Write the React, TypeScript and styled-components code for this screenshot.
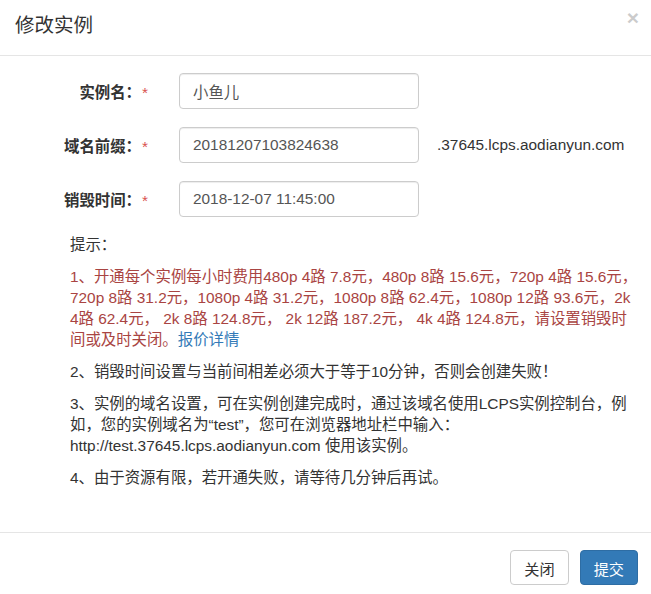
import React from "react";
import styled, { createGlobalStyle } from "styled-components";

const GlobalStyle = createGlobalStyle`
  html, body { margin: 0; padding: 0; background: #fff; }
  body {
    font-family: "Liberation Sans", Arial, "Noto Sans CJK SC", sans-serif;
    font-size: 15.4px;
    color: #333;
    text-spacing-trim: space-all;
  }
  * { box-sizing: border-box; }
`;

const Modal = styled.div`
  width: 651px;
  height: 594px;
  display: flex;
  flex-direction: column;
  background: #fff;
`;

const Header = styled.div`
  position: relative;
  height: 56px;
  padding: 12px 15px 0 15px;
  border-bottom: 1px solid #e5e5e5;
`;

const Title = styled.h4`
  margin: 0;
  font-size: 19.5px;
  font-weight: normal;
  line-height: 26px;
  color: #333;
`;

const Close = styled.button`
  position: absolute;
  top: 7px;
  right: 12px;
  border: 0;
  background: transparent;
  padding: 0;
  font-size: 21px;
  font-weight: bold;
  line-height: 21px;
  color: #000;
  opacity: 0.2;
  font-family: "Liberation Sans", Arial, sans-serif;
  cursor: pointer;
`;

const Body = styled.div`
  flex: 1;
  padding: 17px 0 0 0;
`;

const Form = styled.div`
  display: flex;
  flex-direction: column;
  gap: 18px;
`;

const Row = styled.div`
  display: grid;
  grid-template-columns: 148px 240px auto;
  column-gap: 31px;
  align-items: center;
`;

const Label = styled.label`
  text-align: right;
  font-weight: bold;
  font-size: 15.4px;
  color: #333;
  white-space: nowrap;
`;

const Star = styled.span`
  color: #d9534f;
  font-weight: normal;
  margin-left: 1px;
`;

const Input = styled.input`
  width: 240px;
  height: 36px;
  padding: 6px 13px;
  border: 1px solid #ccc;
  border-radius: 4px;
  font-family: "Liberation Sans", Arial, "Noto Sans CJK SC", sans-serif;
  font-size: 15.4px;
  color: #555;
  box-shadow: inset 0 1px 1px rgba(0, 0, 0, 0.075);
  outline: none;
`;

const Suffix = styled.span`
  margin-left: -13px;
  font-size: 15.4px;
  color: #333;
  white-space: nowrap;
`;

const Tips = styled.div`
  margin: 17px 0 0 70px;
  width: 570px;
`;

const P = styled.p<{ $danger?: boolean }>`
  margin: 0 0 11px;
  font-size: 15.4px;
  line-height: 21px;
  color: ${(p) => (p.$danger ? "#a94442" : "#333")};
`;

const Link = styled.a`
  color: #337ab7;
  text-decoration: none;
`;

const Footer = styled.div`
  height: 62px;
  border-top: 1px solid #e5e5e5;
  padding: 17px 13px 0 0;
  display: flex;
  justify-content: flex-end;
  gap: 11px;
`;

const Button = styled.button<{ $primary?: boolean }>`
  height: 35px;
  padding: 0 13px;
  font-family: "Liberation Sans", Arial, "Noto Sans CJK SC", sans-serif;
  font-size: 15.2px;
  border-radius: 4px;
  border: 1px solid ${(p) => (p.$primary ? "#2e6da4" : "#ccc")};
  background: ${(p) => (p.$primary ? "#337ab7" : "#fff")};
  color: ${(p) => (p.$primary ? "#fff" : "#333")};
  cursor: pointer;
`;

export default function App() {
  return (
    <>
      <GlobalStyle />
      <Modal>
        <Header>
          <Title>修改实例</Title>
          <Close aria-label="Close">×</Close>
        </Header>
        <Body>
          <Form>
            <Row>
              <Label>
                实例名：<Star>*</Star>
              </Label>
              <Input defaultValue="小鱼儿" />
            </Row>
            <Row>
              <Label>
                域名前缀：<Star>*</Star>
              </Label>
              <Input defaultValue="20181207103824638" />
              <Suffix>.37645.lcps.aodianyun.com</Suffix>
            </Row>
            <Row>
              <Label>
                销毁时间：<Star>*</Star>
              </Label>
              <Input defaultValue="2018-12-07 11:45:00" />
            </Row>
          </Form>
          <Tips>
            <P>提示：</P>
            <P $danger>
              1、开通每个实例每小时费用480p 4路 7.8元，480p 8路 15.6元，720p 4路 15.6元，720p 8路 31.2元，1080p 4路 31.2元，1080p 8路 62.4元，1080p 12路 93.6元，2k 4路 62.4元， 2k 8路 124.8元， 2k 12路 187.2元， 4k 4路 124.8元，请设置销毁时间或及时关闭。
              <Link href="#">报价详情</Link>
            </P>
            <P>2、销毁时间设置与当前间相差必须大于等于10分钟，否则会创建失败！</P>
            <P>
              3、实例的域名设置，可在实例创建完成时，通过该域名使用LCPS实例控制台，例如，您的实例域名为“test”，您可在浏览器地址栏中输入：http://test.37645.lcps.aodianyun.com 使用该实例。
            </P>
            <P>4、由于资源有限，若开通失败，请等待几分钟后再试。</P>
          </Tips>
        </Body>
        <Footer>
          <Button>关闭</Button>
          <Button $primary>提交</Button>
        </Footer>
      </Modal>
    </>
  );
}
